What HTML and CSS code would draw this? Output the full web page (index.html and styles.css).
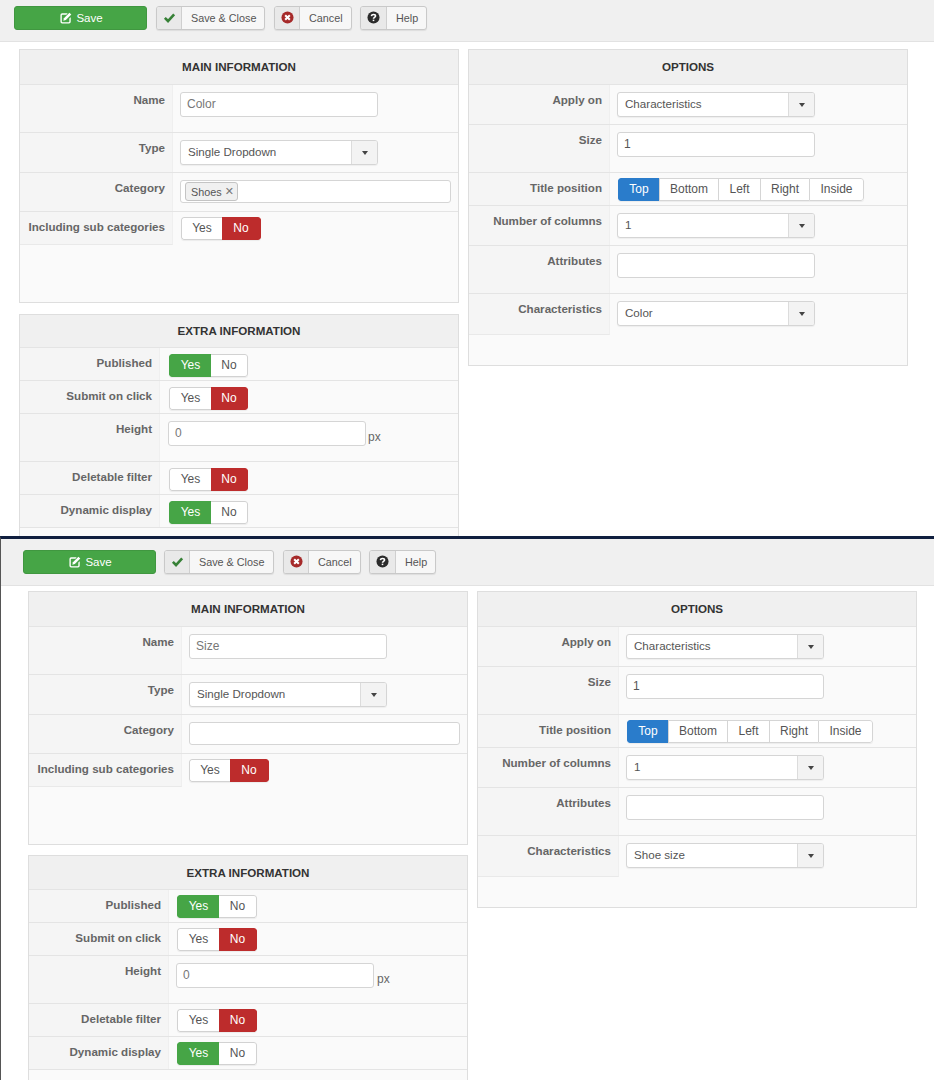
FILE: index.html
```html
<!DOCTYPE html>
<html lang="en">
<head>
<meta charset="utf-8">
<title>Filter</title>
<link rel="stylesheet" href="styles.css">
</head>
<body>
<svg class="defs" width="0" height="0" aria-hidden="true">
  <symbol id="i-edit" viewBox="0 0 14 14"><path fill="#fff" d="M2.5 1.5H9L7.4 3.1H2.9a.8.8 0 0 0-.8.8v7.2c0 .4.4.8.8.8h7.2c.4 0 .8-.4.8-.8V7.6l1.6-1.6v5.5a2 2 0 0 1-2 2h-8a2 2 0 0 1-2-2v-8a2 2 0 0 1 2-2z"/><path fill="#fff" d="M11 .8l2.2 2.2-6.4 6.4-2.9.7.7-2.9z"/></symbol>
  <symbol id="i-check" viewBox="0 0 14 14"><path fill="none" stroke="#378137" stroke-width="2.8" d="M2 7.4l3.4 3.4L12 3.600"/></symbol>
  <symbol id="i-cancel" viewBox="0 0 14 14"><circle cx="7" cy="7" r="6.5" fill="#a62a2a"/><path stroke="#fff" stroke-width="2.2" d="M4.500 4.500l5 5M9.500 4.500l-5 5"/></symbol>
  <symbol id="i-help" viewBox="0 0 14 14"><circle cx="7" cy="7" r="6.500" fill="#2b2b2b"/><path fill="none" stroke="#fff" stroke-width="1.700" d="M4.700 5.500c.2-1.200 1.100-1.800 2.300-1.800 1.300 0 2.200.7 2.200 1.700 0 1.500-2.200 1.500-2.200 3"/><path stroke="#fff" stroke-width="1.700" d="M7 9.300v1.600"/></symbol>
</svg>

<section class="screen screen-first">
  <div class="toolbar">
    <button class="btn-save"><svg class="ico-save"><use href="#i-edit"/></svg>Save</button>
    <button class="btn btn-close"><span class="btn-ico"><svg class="ico"><use href="#i-check"/></svg></span><span class="btn-txt">Save &amp; Close</span></button>
    <button class="btn btn-cancel"><span class="btn-ico"><svg class="ico"><use href="#i-cancel"/></svg></span><span class="btn-txt">Cancel</span></button>
    <button class="btn btn-help"><span class="btn-ico"><svg class="ico"><use href="#i-help"/></svg></span><span class="btn-txt">Help</span></button>
  </div>
  <div class="columns">
    <div class="col">
      <div class="panel panel-main">
        <h3 class="panel-title">MAIN INFORMATION</h3>
        <div class="row row-input"><div class="lab">Name</div><div class="val"><div class="input">Color</div></div></div>
        <div class="row row-select"><div class="lab">Type</div><div class="val"><div class="select"><span class="select-txt">Single Dropdown</span><span class="select-arrow"><i class="caret"></i></span></div></div></div>
        <div class="row row-tags"><div class="lab">Category</div><div class="val"><div class="tags"><span class="tag">Shoes <b class="tag-x">✕</b></span></div></div></div>
        <div class="row row-toggle row-last"><div class="lab">Including sub categories</div><div class="val"><div class="toggle"><span class="opt opt-yes">Yes</span><span class="opt opt-no is-no">No</span></div></div></div>
      </div>
      <div class="panel panel-extra">
        <h3 class="panel-title panel-title-extra">EXTRA INFORMATION</h3>
        <div class="row row-toggle"><div class="lab">Published</div><div class="val"><div class="toggle"><span class="opt opt-yes is-yes">Yes</span><span class="opt opt-no">No</span></div></div></div>
        <div class="row row-toggle"><div class="lab">Submit on click</div><div class="val"><div class="toggle"><span class="opt opt-yes">Yes</span><span class="opt opt-no is-no">No</span></div></div></div>
        <div class="row row-input"><div class="lab">Height</div><div class="val val-px"><div class="input">0</div><span class="px">px</span></div></div>
        <div class="row row-toggle"><div class="lab">Deletable filter</div><div class="val"><div class="toggle"><span class="opt opt-yes">Yes</span><span class="opt opt-no is-no">No</span></div></div></div>
        <div class="row row-toggle"><div class="lab">Dynamic display</div><div class="val"><div class="toggle"><span class="opt opt-yes is-yes">Yes</span><span class="opt opt-no">No</span></div></div></div>
      </div>
    </div>
    <div class="col">
      <div class="panel panel-options">
        <h3 class="panel-title">OPTIONS</h3>
        <div class="row row-select"><div class="lab">Apply on</div><div class="val"><div class="select"><span class="select-txt">Characteristics</span><span class="select-arrow"><i class="caret"></i></span></div></div></div>
        <div class="row row-input"><div class="lab">Size</div><div class="val"><div class="input input-dark">1</div></div></div>
        <div class="row row-seg"><div class="lab">Title position</div><div class="val"><div class="seg"><span class="seg-opt seg-top is-active">Top</span><span class="seg-opt seg-bottom">Bottom</span><span class="seg-opt seg-left">Left</span><span class="seg-opt seg-right">Right</span><span class="seg-opt seg-inside">Inside</span></div></div></div>
        <div class="row row-select"><div class="lab">Number of columns</div><div class="val"><div class="select"><span class="select-txt">1</span><span class="select-arrow"><i class="caret"></i></span></div></div></div>
        <div class="row row-input"><div class="lab">Attributes</div><div class="val"><div class="input"></div></div></div>
        <div class="row row-select row-last"><div class="lab">Characteristics</div><div class="val"><div class="select"><span class="select-txt">Color</span><span class="select-arrow"><i class="caret"></i></span></div></div></div>
      </div>
    </div>
  </div>
</section>

<section class="screen screen-second">
  <div class="toolbar">
    <button class="btn-save"><svg class="ico-save"><use href="#i-edit"/></svg>Save</button>
    <button class="btn btn-close"><span class="btn-ico"><svg class="ico"><use href="#i-check"/></svg></span><span class="btn-txt">Save &amp; Close</span></button>
    <button class="btn btn-cancel"><span class="btn-ico"><svg class="ico"><use href="#i-cancel"/></svg></span><span class="btn-txt">Cancel</span></button>
    <button class="btn btn-help"><span class="btn-ico"><svg class="ico"><use href="#i-help"/></svg></span><span class="btn-txt">Help</span></button>
  </div>
  <div class="columns">
    <div class="col">
      <div class="panel panel-main">
        <h3 class="panel-title">MAIN INFORMATION</h3>
        <div class="row row-input"><div class="lab">Name</div><div class="val"><div class="input">Size</div></div></div>
        <div class="row row-select"><div class="lab">Type</div><div class="val"><div class="select"><span class="select-txt">Single Dropdown</span><span class="select-arrow"><i class="caret"></i></span></div></div></div>
        <div class="row row-tags"><div class="lab">Category</div><div class="val"><div class="tags"></div></div></div>
        <div class="row row-toggle row-last"><div class="lab">Including sub categories</div><div class="val"><div class="toggle"><span class="opt opt-yes">Yes</span><span class="opt opt-no is-no">No</span></div></div></div>
      </div>
      <div class="panel panel-extra">
        <h3 class="panel-title panel-title-extra">EXTRA INFORMATION</h3>
        <div class="row row-toggle"><div class="lab">Published</div><div class="val"><div class="toggle"><span class="opt opt-yes is-yes">Yes</span><span class="opt opt-no">No</span></div></div></div>
        <div class="row row-toggle"><div class="lab">Submit on click</div><div class="val"><div class="toggle"><span class="opt opt-yes">Yes</span><span class="opt opt-no is-no">No</span></div></div></div>
        <div class="row row-input"><div class="lab">Height</div><div class="val val-px"><div class="input">0</div><span class="px">px</span></div></div>
        <div class="row row-toggle"><div class="lab">Deletable filter</div><div class="val"><div class="toggle"><span class="opt opt-yes">Yes</span><span class="opt opt-no is-no">No</span></div></div></div>
        <div class="row row-toggle"><div class="lab">Dynamic display</div><div class="val"><div class="toggle"><span class="opt opt-yes is-yes">Yes</span><span class="opt opt-no">No</span></div></div></div>
      </div>
    </div>
    <div class="col">
      <div class="panel panel-options">
        <h3 class="panel-title">OPTIONS</h3>
        <div class="row row-select"><div class="lab">Apply on</div><div class="val"><div class="select"><span class="select-txt">Characteristics</span><span class="select-arrow"><i class="caret"></i></span></div></div></div>
        <div class="row row-input"><div class="lab">Size</div><div class="val"><div class="input input-dark">1</div></div></div>
        <div class="row row-seg"><div class="lab">Title position</div><div class="val"><div class="seg"><span class="seg-opt seg-top is-active">Top</span><span class="seg-opt seg-bottom">Bottom</span><span class="seg-opt seg-left">Left</span><span class="seg-opt seg-right">Right</span><span class="seg-opt seg-inside">Inside</span></div></div></div>
        <div class="row row-select"><div class="lab">Number of columns</div><div class="val"><div class="select"><span class="select-txt">1</span><span class="select-arrow"><i class="caret"></i></span></div></div></div>
        <div class="row row-input"><div class="lab">Attributes</div><div class="val"><div class="input"></div></div></div>
        <div class="row row-select row-last"><div class="lab">Characteristics</div><div class="val"><div class="select"><span class="select-txt">Shoe size</span><span class="select-arrow"><i class="caret"></i></span></div></div></div>
      </div>
    </div>
  </div>
</section>
</body>
</html>
```
FILE: styles.css
```css
* { box-sizing: border-box; }
html, body { margin: 0; padding: 0; }
body {
  width: 934px;
  height: 1080px;
  overflow: hidden;
  background: #fff;
  font-family: "Liberation Sans", Arial, sans-serif;
  font-size: 12px;
  color: #555;
}
.defs { display: block; height: 0; }

.screen { overflow: hidden; }
.screen-first { height: 536px; }
.screen-second {
  height: 544px;
  border-top: 3px solid #101f3f;
  border-left: 1px solid #555;
}

/* toolbar */
.toolbar {
  display: flex;
  align-items: flex-start;
  background: #f0f0f0;
  border-bottom: 1px solid #e2e2e2;
}
.screen-first .toolbar { height: 42px; padding: 6px 0 0 14px; }
.screen-second .toolbar { height: 47px; padding: 11px 0 0 22px; }

.btn-save {
  width: 133px;
  height: 24px;
  margin-right: 9px;
  display: flex;
  align-items: center;
  justify-content: center;
  gap: 4px;
  background: #46a546;
  border: 1px solid #409740;
  border-radius: 3px;
  color: #fff;
  font: 11.5px "Liberation Sans", Arial, sans-serif;
  padding: 0 0 0 2px;
}
.screen-second .btn-save { margin-right: 8px; }
.ico-save { width: 12px; height: 12px; }
.btn {
  height: 24px;
  margin-right: 9px;
  display: flex;
  align-items: stretch;
  padding: 0;
  background: #f7f7f7;
  border: 1px solid #c9c9c9;
  border-radius: 3px;
  box-shadow: 0 1px 1px rgba(0, 0, 0, 0.08);
  color: #555;
  font: 10.8px "Liberation Sans", Arial, sans-serif;
}
.btn-close { width: 109px; }
.screen-second .btn-close { width: 110px; }
.btn-cancel { width: 78px; margin-right: 8px; }
.btn-help { width: 67px; }
.btn-ico {
  width: 25px;
  flex: none;
  display: flex;
  align-items: center;
  justify-content: center;
  background: #e9e9e9;
  border-right: 1px solid #cfcfcf;
  border-radius: 2px 0 0 2px;
}
.btn-help .btn-ico { width: 26px; }
.ico { width: 13px; height: 13px; margin-top: -2px; }
.btn-txt { padding-left: 9px; line-height: 22px; white-space: nowrap; }

/* columns */
.columns {
  display: grid;
  grid-template-columns: 440px 440px;
  column-gap: 9px;
  align-items: start;
}
.screen-first .columns { padding: 7px 0 0 19px; }
.screen-second .columns { padding: 5px 0 0 27px; }
.col { display: flex; flex-direction: column; gap: 11px; }
.screen-second .col { gap: 10px; }

/* panels */
.panel {
  background: #fafafa;
  border: 1px solid #dedede;
}
.panel-main { height: 254px; }
.panel-extra { height: 268px; }
.panel-options { height: 317px; }
.panel-title {
  margin: 0;
  height: 35px;
  line-height: 34px;
  text-align: center;
  font-size: 11.6px;
  font-weight: bold;
  color: #333;
  background: #f0f0f0;
  border-bottom: 1px solid #e4e4e4;
}
.panel-title-extra { height: 33px; line-height: 32px; }
.screen-second .panel-title-extra { height: 34px; line-height: 33px; }

.row {
  display: grid;
  border-bottom: 1px solid #e4e4e4;
}
.row-last { border-bottom: 0; }
.panel-main .row { grid-template-columns: 153px 1fr; }
.panel-extra .row { grid-template-columns: 140px 1fr; }
.panel-options .row { grid-template-columns: 141px 1fr; }

.lab {
  padding: 7px 7px 0 0;
  text-align: right;
  font-size: 11.6px;
  font-weight: bold;
  line-height: 16px;
  color: #666;
  background: #f5f5f5;
  border-right: 1px solid #efefef;
}
.row-last .lab { border-bottom: 1px solid #e9e9e9; }
.row-last { height: 34px; }
.row-select.row-last { height: 41px; }

.val { padding: 0 7px; }
.val-px { display: flex; align-items: flex-start; }
.row-input { height: 48px; }
.row-input .val { padding-top: 7px; }
.row-select { height: 40px; }
.row-select .val { padding-top: 7px; }
.row-tags { height: 39px; }
.row-tags .val { padding-top: 7px; }
.row-toggle { height: 33px; }
.row-toggle .val { padding-top: 5px; }
.screen-first .panel-extra .row-toggle .val { padding-top: 6px; }
.row-seg { height: 33px; }
.row-seg .val { padding-top: 5px; }

.input {
  width: 198px;
  height: 25px;
  padding: 0 6px;
  line-height: 23px;
  background: #fff;
  border: 1px solid #d5d5d5;
  border-radius: 3px;
  color: #777;
  flex: none;
}
.input-dark { color: #555; }
.screen-first .val-px { padding-left: 8px; }
.px { margin: 9px 0 0 3px; color: #666; }
.screen-first .px { margin-left: 2px; }

.select {
  display: flex;
  width: 198px;
  height: 25px;
  background: #fff;
  border: 1px solid #d5d5d5;
  border-radius: 3px;
  box-shadow: 0 1px 1px rgba(0, 0, 0, 0.05);
}
.select-txt { flex: 1; padding-left: 7px; line-height: 22px; font-size: 11.6px; color: #555; }
.select-arrow {
  width: 26px;
  display: flex;
  align-items: center;
  justify-content: center;
  background: #f3f3f3;
  border-left: 1px solid #dcdcdc;
  border-radius: 0 2px 2px 0;
}
.caret {
  width: 0;
  height: 0;
  border-left: 3.5px solid transparent;
  border-right: 3.5px solid transparent;
  border-top: 4px solid #444;
}

.tags {
  width: 271px;
  height: 23px;
  padding: 1px 4px;
  background: #fff;
  border: 1px solid #d5d5d5;
  border-radius: 3px;
}
.tag {
  display: inline-flex;
  align-items: center;
  gap: 3px;
  width: 53px;
  height: 19px;
  padding-left: 5px;
  font-size: 10.8px;
  background: #f0f0f0;
  border: 1px solid #c4c4c4;
  border-radius: 3px;
  color: #555;
}
.tag-x { font-size: 11px; line-height: 1; color: #777; font-family: "DejaVu Sans", sans-serif; }

.toggle {
  display: inline-flex;
  height: 23px;
  margin-left: 1px;
  border-radius: 3px;
  background: #fff;
  overflow: hidden;
  box-shadow: 0 1px 1px rgba(0, 0, 0, 0.06);
}
.screen-first .panel-extra .toggle { margin-left: 2px; }
.screen-second .panel-main .toggle { margin-left: 0; }
.opt {
  line-height: 21px;
  text-align: center;
  color: #555;
  border: 1px solid #d2d2d2;
  border-radius: 3px 0 0 3px;
}
.opt-yes { width: 42px; border-right: 0; }
.opt-no { width: 37px; border-left: 0; border-radius: 0 3px 3px 0; }
.screen-second .panel-extra .opt-no { width: 38px; }
.panel-main .opt-yes { width: 41px; }
.panel-main .opt-no { width: 39px; }
.is-yes { background: #46a546; border-color: #46a546; color: #fff; }
.is-no { background: #bd2c2c; border-color: #bd2c2c; color: #fff; }

.seg {
  display: inline-flex;
  height: 23px;
  margin-left: 1px;
  background: #fff;
  border-radius: 3px;
  overflow: hidden;
  box-shadow: 0 1px 1px rgba(0, 0, 0, 0.06);
}
.seg-opt {
  line-height: 21px;
  text-align: center;
  color: #555;
  border: 1px solid #d5d5d5;
  border-right: 0;
}
.seg-top { width: 41px; border-radius: 3px 0 0 3px; }
.seg-bottom { width: 59px; }
.seg-left { width: 42px; }
.seg-right { width: 49px; }
.seg-inside { width: 55px; border-right: 1px solid #d5d5d5; border-radius: 0 3px 3px 0; }
.is-active { background: #2a7ccb; border-color: #2a7ccb; color: #fff; }
```
